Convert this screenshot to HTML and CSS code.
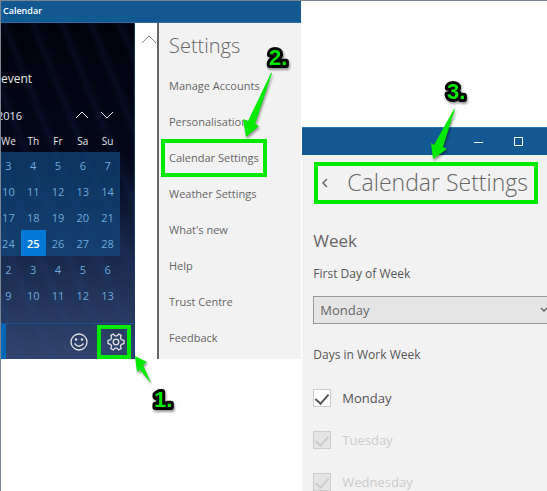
FILE: index.html
```html
<!DOCTYPE html>
<html lang="en">
<head>
    <meta charset="UTF-8">
    <meta name="viewport" content="width=device-width, initial-scale=1.0">
    <title>Calendar Settings</title>
    <link rel="stylesheet" href="styles.css">
</head>
<body>
    <div id="wrapper">
        <!-- calendar with settings menu -->
        <div class="window main-window">
            <header class="titlebar">Calendar</header>
            <div class="window-body">
                <section class="calendar">
                    <div class="event">event</div>
                    <div class="month">
                        <span class="year">2016</span>
                        <button type="button" class="icon-btn" aria-label="Previous month">
                            <svg width="14" height="8" viewBox="0 0 14 8"><path d="M1 7L7 1L13 7"/></svg>
                        </button>
                        <button type="button" class="icon-btn" aria-label="Next month">
                            <svg width="14" height="8" viewBox="0 0 14 8"><path d="M1 1L7 7L13 1"/></svg>
                        </button>
                    </div>
                    <table class="days">
                        <thead>
                            <tr><th>We</th><th>Th</th><th>Fr</th><th>Sa</th><th>Su</th></tr>
                        </thead>
                        <tbody class="current">
                            <tr><td>3</td><td>4</td><td>5</td><td>6</td><td>7</td></tr>
                            <tr><td>10</td><td>11</td><td>12</td><td>13</td><td>14</td></tr>
                            <tr><td>17</td><td>18</td><td>19</td><td>20</td><td>21</td></tr>
                            <tr><td>24</td><td class="today">25</td><td>26</td><td>27</td><td>28</td></tr>
                        </tbody>
                        <tbody>
                            <tr><td>2</td><td>3</td><td>4</td><td>5</td><td>6</td></tr>
                            <tr><td>9</td><td>10</td><td>11</td><td>12</td><td>13</td></tr>
                        </tbody>
                    </table>
                    <footer class="toolbar">
                        <button type="button" class="icon-btn smiley" aria-label="Feedback">
                            <svg width="20" height="20" viewBox="0 0 20 20">
                                <circle cx="10" cy="10" r="8"/>
                                <path d="M5.5 11.5Q10 17 14.5 11.5"/>
                                <circle class="eye" cx="7" cy="7.5" r="1.2"/>
                                <circle class="eye" cx="13" cy="7.5" r="1.2"/>
                            </svg>
                        </button>
                        <button type="button" class="icon-btn gear marked" aria-label="Settings">
                            <svg width="18" height="18" viewBox="0 0 18 18">
                                <path d="M6.3 1L8 2.9H10L11.7 1L14.1 2.4L13.4 4.9L14.4 6.7L17 7.4V10.6L14.4 11.3L13.4 13.1L14.1 15.6L11.7 17L10 15.1H8L6.3 17L3.9 15.6L4.6 13.1L3.6 11.3L1 10.6V7.4L3.6 6.7L4.6 4.9L3.9 2.4Z"/>
                                <circle cx="9" cy="9" r="2.8"/>
                            </svg>
                        </button>
                    </footer>
                </section>
                <div class="scroll-strip">
                    <button type="button" class="icon-btn" aria-label="Scroll up">
                        <svg width="16" height="9" viewBox="0 0 16 9"><path d="M1 8L8 1L15 8"/></svg>
                    </button>
                </div>
                <nav class="settings">
                    <h1>Settings</h1>
                    <a href="#">Manage Accounts</a>
                    <a href="#">Personalisation</a>
                    <a href="#" class="marked">Calendar Settings</a>
                    <a href="#">Weather Settings</a>
                    <a href="#">What's new</a>
                    <a href="#">Help</a>
                    <a href="#">Trust Centre</a>
                    <a href="#">Feedback</a>
                </nav>
            </div>
        </div>

        <!-- calendar settings page -->
        <div class="window detail-window">
            <header class="titlebar">
                <button type="button" class="icon-btn" aria-label="Minimise">
                    <svg width="10" height="10" viewBox="0 0 10 10"><path d="M0 5.5H9"/></svg>
                </button>
                <button type="button" class="icon-btn" aria-label="Maximise">
                    <svg width="10" height="10" viewBox="0 0 10 10"><path d="M.5 .5H8.5V8.5H.5Z"/></svg>
                </button>
            </header>
            <form class="detail">
                <div class="page-title marked">
                    <button type="button" class="icon-btn" aria-label="Back">
                        <svg width="6" height="10" viewBox="0 0 6 10"><path d="M5 1L1 5L5 9"/></svg>
                    </button>
                    <h2>Calendar Settings</h2>
                </div>
                <h3>Week</h3>
                <label class="caption" for="firstDay">First Day of Week</label>
                <div class="select-box">
                    <select id="firstDay">
                        <option>Monday</option>
                        <option>Tuesday</option>
                        <option>Wednesday</option>
                    </select>
                    <svg width="8" height="6" viewBox="0 0 8 6"><path d="M1 1L4 4L7 1"/></svg>
                </div>
                <fieldset>
                    <legend class="caption">Days in Work Week</legend>
                    <label class="check"><input type="checkbox" checked>Monday</label>
                    <label class="check off"><input type="checkbox" checked disabled>Tuesday</label>
                    <label class="check off"><input type="checkbox" checked disabled>Wednesday</label>
                </fieldset>
            </form>
        </div>

        <!-- step numbers and arrows -->
        <svg class="steps" width="547" height="491" viewBox="0 0 547 491">
            <path d="M135 356L147 362L143 365L151 383L140 370L137 372Z"/>
            <path d="M272 73L255 124L259 126L246 137L243 119L248 121L271 73Z"/>
            <path d="M455 109L443 147L447 149L433 159L431 143L434 145L454 109Z"/>
            <text x="154" y="407">1.</text>
            <text x="269" y="65">2.</text>
            <text x="447" y="99">3.</text>
        </svg>
    </div>
</body>
</html>
```

FILE: styles.css
```css
* {
    box-sizing: border-box;
}
body {
    margin: 0;
    background: #fff;
    color: #666;
    font-family: "Open Sans", "Noto Sans", sans-serif;
    font-size: 12px;
}
#wrapper {
    position: relative;
    display: flex;
    align-items: flex-start;
    gap: 1px;
    min-height: 100vh;
    overflow: hidden;
    border-top: 1px solid #7c8594;
    border-left: 1px solid #7c8594;
}
h1, h2, h3 {
    margin: 0;
    font-weight: 300;
}
.icon-btn {
    display: flex;
    align-items: center;
    justify-content: center;
    padding: 0;
    border: none;
    background: none;
    color: inherit;
}
svg {
    fill: none;
    stroke: currentColor;
}
.marked {
    outline: 4px solid #00ea00;
}
.titlebar {
    display: flex;
    align-items: center;
    background: #125893;
    color: #fff;
}

/* left window */
.main-window {
    flex: 0 0 55%;
}
.main-window .titlebar {
    height: 22px;
    padding-left: 2px;
    padding-bottom: 3px;
    font-size: 9px;
    font-weight: 600;
    border-bottom: 1px solid #2a6ba3;
}
.window-body {
    display: flex;
}
.calendar {
    flex: 0 0 134px;
    display: flex;
    flex-direction: column;
    overflow: hidden;
    color: #e4e4e4;
    background:
        repeating-linear-gradient(68deg, transparent 0 14px, rgba(40, 80, 160, .1) 20px, transparent 27px),
        linear-gradient(#01020c 0%, #030719 40%, #17284a 68%, #30446d 100%);
    border-right: 1px solid #1b3a66;
}
.event {
    margin-top: 46px;
    font-size: 12px;
    line-height: 20px;
}
.month {
    display: flex;
    align-items: center;
    height: 20px;
    margin: 16px 15px 0 -4px;
}
.month .icon-btn {
    width: 25px;
    height: 20px;
}
.year {
    flex: 1;
    font-size: 11px;
}
.days {
    width: 124px;
    margin: 4px 0 0 -5px;
    border-collapse: collapse;
    table-layout: fixed;
    text-align: center;
    font-size: 11px;
}
.days th {
    height: 23px;
    padding: 0;
    font-size: 10px;
    font-weight: 400;
}
.days td {
    height: 26px;
    padding: 0;
    color: #6fa9dc;
}
.current {
    background: rgba(18, 76, 132, .65);
}
.days .today {
    background: #0078d7;
    color: #fff;
    font-weight: 600;
}
.toolbar {
    display: flex;
    align-items: center;
    justify-content: flex-end;
    gap: 12px;
    height: 36px;
    margin-top: 15px;
    padding-right: 7px;
    border-top: 1px solid #1f4f86;
    border-left: 5px solid #0067b8;
}
.gear {
    width: 26px;
    height: 26px;
    padding-left: 4px;
}
.gear svg, .smiley svg {
    stroke-width: 1.3;
}
.eye {
    fill: currentColor;
    stroke: none;
}
.scroll-strip {
    flex: 0 0 23px;
    padding: 12px 0 0 6px;
    border-right: 2px solid #666;
    color: #888;
}
.settings {
    flex: 1;
    display: flex;
    flex-direction: column;
    align-items: flex-start;
    gap: 6px;
    padding: 6px 0 5px 6px;
    background: #f2f2f2;
}
.settings h1 {
    margin-bottom: 2px;
    padding-left: 4px;
    font-size: 20px;
    line-height: 34px;
}
.settings a {
    height: 30px;
    padding: 0 4px;
    color: #666;
    font-size: 11px;
    line-height: 30px;
    text-decoration: none;
}

/* right window */
.detail-window {
    flex: 1;
    min-width: 0;
    min-height: calc(100vh - 127px);
    margin-top: 126px;
    overflow: hidden;
    background: #f2f2f2;
}
.detail-window .titlebar {
    justify-content: flex-end;
    gap: 12px;
    height: 28px;
    padding-right: 14px;
    border-top: 1px solid #2878b8;
}
.detail-window .titlebar .icon-btn {
    width: 28px;
    height: 28px;
}
.detail {
    padding: 11px 0 0 11px;
}
.page-title {
    display: flex;
    align-items: center;
    height: 34px;
    margin: 0 13px 0 5px;
}
.page-title .icon-btn {
    width: 14px;
    height: 34px;
}
.page-title .icon-btn svg {
    stroke-width: 1.5;
}
.page-title h2 {
    margin-left: 15px;
    padding-bottom: 2px;
    font-size: 23px;
    line-height: 32px;
    white-space: nowrap;
}
.detail h3 {
    margin-top: 28px;
    font-size: 17px;
    font-weight: 400;
    line-height: 26px;
}
.caption {
    display: block;
    margin-top: 10px;
    padding: 0;
    color: #555;
    line-height: 20px;
}
.select-box {
    position: relative;
    margin: 12px -6px 0 0;
}
.select-box select {
    width: 100%;
    height: 28px;
    padding: 0 6px;
    border: 1px solid #999;
    border-radius: 0;
    appearance: none;
    background: #e5e5e5;
    color: #666;
    font: inherit;
    font-size: 13px;
}
.select-box svg {
    position: absolute;
    top: 11px;
    right: 5px;
    stroke-width: 1.5;
}
fieldset {
    margin: 21px 0 0;
    padding: 0;
    border: none;
}
.check {
    display: flex;
    align-items: center;
    gap: 11px;
    height: 18px;
    margin-top: 24px;
    color: #555;
    font-size: 13px;
}
.check input {
    display: flex;
    justify-content: center;
    width: 18px;
    height: 18px;
    margin: 0;
    border: 1px solid #ccc;
    appearance: none;
    background: #fff;
}
.check input::after {
    content: "";
    width: 6px;
    height: 11px;
    margin-top: 1px;
    border: solid #555;
    border-width: 0 2px 2px 0;
    transform: rotate(42deg);
}
.check.off {
    color: #ccc;
}
.check.off input {
    background: #e5e5e5;
}
.check.off input::after {
    border-color: #ccc;
}

.steps {
    position: absolute;
    top: -1px;
    left: -1px;
    pointer-events: none;
    fill: #00ea00;
    stroke: none;
    filter: drop-shadow(1px 2px 1px rgba(0, 0, 0, .4));
}
.steps text {
    font-family: "Liberation Sans", Arial, sans-serif;
    font-size: 22px;
    font-weight: 700;
    stroke: #000;
    stroke-width: 6px;
    stroke-linejoin: round;
    paint-order: stroke;
}
```
